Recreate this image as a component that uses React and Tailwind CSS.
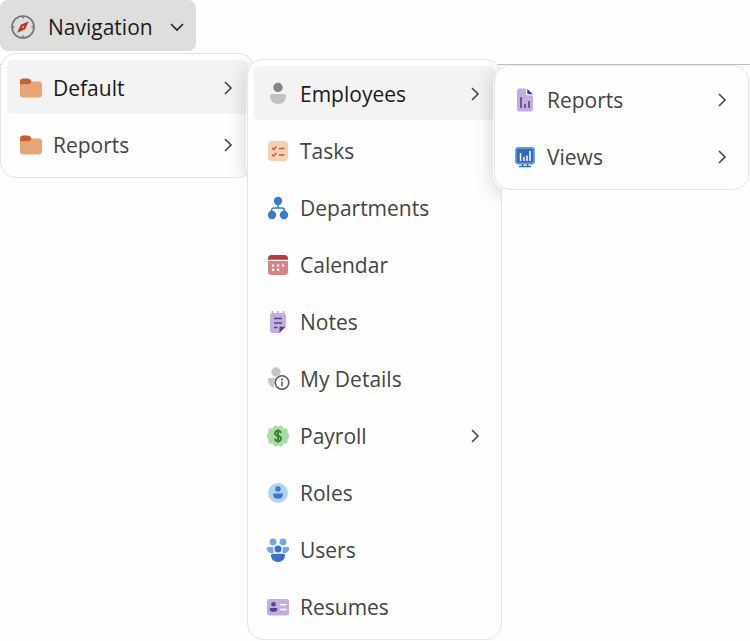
import clsx from 'clsx';

const icons = {
  compass: (
    <>
      <circle cx="12" cy="12" r="11" fill="none" stroke="#767676" strokeWidth="1.7" />
      <path d="M12 1v2.500M12 20.500v2.500M1 12h2.500M20.500 12h2.500" stroke="#767676" strokeWidth="1.5" />
      <path d="M17.800 6.200l-3.600 8-8 3.600 3.600-8z" fill="#c4302b" />
      <circle cx="12" cy="12" r="1" fill="#f3c9c7" />
    </>
  ),
  folder: (
    <>
      <path d="M1 8.500h7.500L12 5.500h8a3 3 0 0 1 3 3V18.500a3 3 0 0 1-3 3H4a3 3 0 0 1-3-3z" fill="#e6a575" />
      <path d="M1 8.500V5.500a3 3 0 0 1 3-3h4.500c2 0 3 1 4 3C11.500 7.500 10 8.500 8 8.500z" fill="#c8602a" />
    </>
  ),
  employee: (
    <>
      <circle cx="12" cy="5.500" r="4.700" fill="#868686" />
      <path d="M6 12h12a2 2 0 0 1 2 2c0 5-3.500 8-8 8s-8-3-8-8a2 2 0 0 1 2-2z" fill="#c2c2c2" />
    </>
  ),
  tasks: (
    <>
      <rect x="2" y="2" width="20" height="20" rx="3.5" fill="#f4d0b7" />
      <path d="M6 9l1.600 1.500L10.500 7.500M6 15.500L7.600 17l2.900-3M13 9.500h5.500M13 16h5.500" fill="none" stroke="#c65a24" strokeWidth="1.5" />
    </>
  ),
  departments: (
    <>
      <path d="M12 8v4M5.500 17v-2.500a2.500 2.500 0 0 1 2.500-2.500h8a2.500 2.500 0 0 1 2.500 2.500V17" fill="none" stroke="#3d78cf" strokeWidth="1.6" />
      <circle cx="12" cy="5" r="4.200" fill="#3d78cf" />
      <circle cx="6" cy="19" r="4.200" fill="#3d78cf" />
      <circle cx="18" cy="19" r="4.200" fill="#3d78cf" />
    </>
  ),
  calendar: (
    <>
      <path d="M2 8h20v10.500a3.500 3.500 0 0 1-3.500 3.500h-13A3.500 3.500 0 0 1 2 18.500z" fill="#d78486" />
      <path d="M2 6.700V5.500A3.500 3.500 0 0 1 5.500 2h13A3.500 3.500 0 0 1 22 5.500v1.200z" fill="#b93a37" />
      <path d="M6 12.500h2.200M11 12.500h2.200M16 12.500h2.200M6 16.800h2.200M11 16.800h2.200" stroke="#fff" strokeWidth="2.2" />
    </>
  ),
  notes: (
    <>
      <path d="M4 5.500a2.500 2.500 0 0 1 2.500-2.500h11A2.500 2.500 0 0 1 20 5.500V16h-3.500a2.500 2.500 0 0 0-2.500 2.500V23H6.500A2.500 2.500 0 0 1 4 20.500z" fill="#c2b0dc" />
      <path d="M6.500 1v3M12 1v3M17.500 1v3" stroke="#c2b0dc" strokeWidth="2" />
      <path d="M8 8.500h8M8 13h8M8 17.500h3.500" stroke="#5f3a9c" strokeWidth="1.7" />
      <path d="M13.500 17.500a1 1 0 0 1 1-1H20l-6.500 6.500z" fill="#5f3a9c" />
    </>
  ),
  details: (
    <>
      <circle cx="10" cy="5" r="4.7" fill="#c6c6c6" />
      <path d="M3 11h8c-3 2.500-4 6-2.500 10C4.500 20 2 17 2 12.500A1.500 1.500 0 0 1 3 11z" fill="#c6c6c6" />
      <circle cx="16" cy="15.5" r="8" fill="#fdfdfd" />
      <circle cx="16" cy="15.5" r="6.8" fill="none" stroke="#5c5c5c" strokeWidth="1.6" />
      <path d="M16 14.500v4.700" stroke="#5c5c5c" strokeWidth="1.6" />
      <circle cx="16" cy="12.3" r="1.1" fill="#5c5c5c" />
    </>
  ),
  payroll: (
    <>
      <path
        d="M12 2.700Q15.600-.5 17.500 4.500Q22.800 3.600 21.500 8.500Q25 12 21.500 15.500Q22.800 20.400 17.500 19.500Q15.600 24.500 12 21.300Q8.400 24.500 6.500 19.500Q1.200 20.400 2.500 15.500Q-1 12 2.500 8.500Q1.200 3.600 6.500 4.500Q8.400-.5 12 2.700z"
        fill="#a9dba2"
      />
      <path d="M15 9c-.3-1.300-1.400-2-3-2s-3 .8-3 2.400c0 3.400 6 1.700 6 5 0 1.700-1.400 2.500-3 2.500s-2.900-.7-3.200-2.200M12 5.300v13.400" fill="none" stroke="#35832f" strokeWidth="1.9" />
    </>
  ),
  roles: (
    <>
      <circle cx="12" cy="12" r="10" fill="#b0d2f3" />
      <circle cx="12" cy="8" r="2.7" fill="#3a77cf" />
      <path d="M8 12.500h8a1 1 0 0 1 1 1c0 2.700-2 4.300-5 4.300s-5-1.600-5-4.300a1 1 0 0 1 1-1z" fill="#3a77cf" />
    </>
  ),
  users: (
    <>
      <g fill="#6fa8e4">
        <circle cx="7" cy="4" r="3.4" />
        <circle cx="17" cy="4" r="3.4" />
        <path d="M2 9h5.500v6H6C3 15 .8 13 .8 10.200A1.200 1.200 0 0 1 2 9zM22 9h-5.500v6H18c3 0 5.200-2 5.200-4.800A1.200 1.200 0 0 0 22 9z" />
      </g>
      <circle cx="12" cy="11" r="4.5" fill="#fefefe" />
      <g fill="#3671cb">
        <circle cx="12" cy="11" r="3.5" />
        <path d="M6.500 15.800h11a1.500 1.500 0 0 1 1.500 1.500c0 4.200-3 6.600-7 6.600s-7-2.400-7-6.600a1.500 1.500 0 0 1 1.500-1.500z" />
      </g>
    </>
  ),
  resumes: (
    <>
      <rect x="1" y="4" width="22" height="16.5" rx="2.5" fill="#c2b0dc" />
      <g fill="#5f3a9c">
        <circle cx="7.5" cy="9.3" r="2.3" />
        <path d="M4.800 13h5.600a1 1 0 0 1 1 1c0 2-1.500 2.800-3.900 2.800S3.700 16 3.700 14a1 1 0 0 1 1.100-1z" />
      </g>
      <path d="M14.500 9.800H20M14.500 14.600H20" stroke="#fff" strokeWidth="1.5" strokeLinecap="round" />
    </>
  ),
  report: (
    <>
      <path d="M4 3A2.500 2.500 0 0 1 6.500.5H13V5a2.500 2.500 0 0 0 2.500 2.500H20V21a2.500 2.500 0 0 1-2.500 2.500h-11A2.500 2.500 0 0 1 4 21z" fill="#c2b0dc" />
      <path d="M14.200.8V5a1.300 1.300 0 0 0 1.300 1.300h4.500z" fill="#5f3a9c" />
      <path d="M8 9v11M12 16v4M16 13v7" stroke="#5f3a9c" strokeWidth="1.6" />
    </>
  ),
  views: (
    <>
      <rect x="3" y="3" width="18" height="15.5" rx="2" fill="#3268bd" stroke="#5d9ce2" strokeWidth="1.8" />
      <path d="M7.500 8v8M11 12v4M14 10.500V16M17 6V16" stroke="#fff" strokeWidth="1.5" />
      <path d="M9.500 19v2M14.500 19v2M6 21.500h12" stroke="#3268bd" strokeWidth="1.6" />
    </>
  ),
};

const mainMenu = [
  { name: 'Default', icon: 'folder', sub: true, active: true },
  { name: 'Reports', icon: 'folder', sub: true },
];

const defaultMenu = [
  { name: 'Employees', icon: 'employee', sub: true, active: true },
  { name: 'Tasks', icon: 'tasks' },
  { name: 'Departments', icon: 'departments' },
  { name: 'Calendar', icon: 'calendar' },
  { name: 'Notes', icon: 'notes' },
  { name: 'My Details', icon: 'details' },
  { name: 'Payroll', icon: 'payroll', sub: true },
  { name: 'Roles', icon: 'roles' },
  { name: 'Users', icon: 'users' },
  { name: 'Resumes', icon: 'resumes' },
];

const employeesMenu = [
  { name: 'Reports', icon: 'report', sub: true },
  { name: 'Views', icon: 'views', sub: true },
];

function Icon({ name, className }) {
  return (
    <svg viewBox="0 0 24 24" className={clsx('shrink-0', className)} aria-hidden="true">
      {icons[name]}
    </svg>
  );
}

function Chevron({ down }) {
  return (
    <svg viewBox="0 0 16 16" className="size-4 shrink-0" fill="none" stroke={down ? '#222' : '#444'} strokeWidth="1.6" aria-hidden="true">
      <path d={down ? 'M2 5l6 6 6-6' : 'M5 2l6 6-6 6'} />
    </svg>
  );
}

function Menu({ label, items, shade, className }) {
  return (
    <div className={clsx('relative w-[255px] shrink-0 overflow-hidden rounded-2xl border border-[#e4e4e4] bg-[#fefefe] p-1.5', className)}>
      <ul role="menu" aria-label={label} className="flex flex-col gap-[3px]">
        {items.map((item) => (
          <li key={item.name} role="none">
            <button
              type="button"
              role="menuitem"
              aria-haspopup={item.sub ? 'menu' : undefined}
              className={clsx(
                'flex h-[54px] w-full items-center gap-2.5 rounded-md px-3 pt-0.5 text-left hover:bg-[#f3f3f3]',
                item.active ? 'bg-[#f3f3f3] text-[#1a1a1a]' : 'text-[#444]'
              )}
            >
              <Icon name={item.icon} className="size-6" />
              <span className="flex-1">{item.name}</span>
              {item.sub && <Chevron />}
            </button>
          </li>
        ))}
      </ul>
      {/* shade cast by the open submenu */}
      {shade && <div className={clsx('pointer-events-none absolute top-1.5 -right-8 w-10 rounded-2xl shadow-[0_4px_20px_rgba(0,0,0,0.18)]', shade)} />}
    </div>
  );
}

export default function App() {
  return (
    <div className="min-h-screen overflow-hidden bg-[#fefefe] font-['Open_Sans',sans-serif] text-[21px] leading-7">
      <header className="h-[65px] border-b border-[#bdbdbd]">
        <button type="button" aria-expanded="true" className="flex h-[51px] items-center rounded-lg bg-[#dededd] px-[11px] pt-0.5 text-[#1a1a1a]">
          <Icon name="compass" className="size-6" />
          <span className="mr-4 ml-[13px]">Navigation</span>
          <Chevron down />
        </button>
      </header>

      <nav className="relative -mt-3 flex items-start">
        <Menu label="Navigation" items={mainMenu} shade="h-full" />
        <Menu label="Default" items={defaultMenu} shade="h-[125px]" className="z-10 mt-1.5 -ml-2" />
        <Menu label="Employees" items={employeesMenu} className="z-20 mt-3 -ml-2" />
      </nav>
    </div>
  );
}
